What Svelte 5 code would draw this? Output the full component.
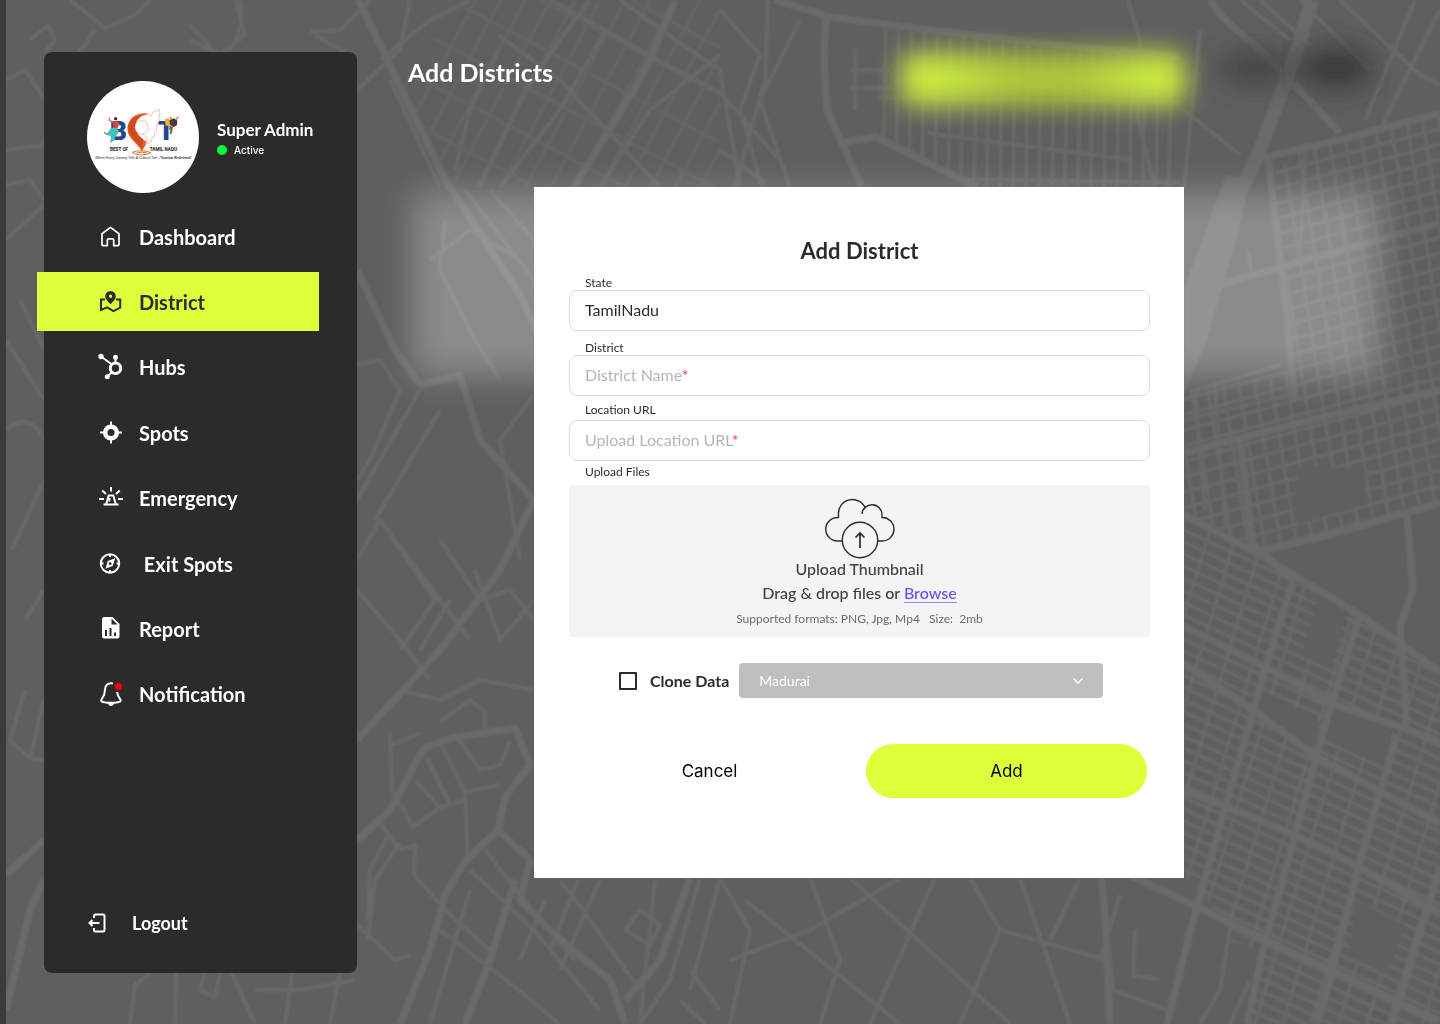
<script>
  const items = [
    { id: 'dashboard', label: 'Dashboard' },
    { id: 'district', label: 'District' },
    { id: 'hubs', label: 'Hubs' },
    { id: 'spots', label: 'Spots' },
    { id: 'emergency', label: 'Emergency' },
    { id: 'exit', label: '\u00a0Exit Spots' },
    { id: 'report', label: 'Report' },
    { id: 'notification', label: 'Notification' }
  ];
  const active = 'district';

  let stateName = $state('TamilNadu');
  let district = $state('');
  let location = $state('');
  let clone = $state(false);

  const majorRoads = [
    'M358 0L402 90L445 180L519 293L560 380',
    'M675 0L650 60L634 90L574 187L560 230',
    'M775 0L830 17L930 30L1041 43L1179 57',
    'M826 17Q822 70 828 113L862 187',
    'M839 143L876 137L977 187',
    'M1211 0Q1216 16 1253 43L1295 85L1340 133',
    'M1253 160L1340 140L1440 113',
    'M1211 287L1300 262L1440 223',
    'M1184 453L1310 420L1440 390',
    'M1183 514L1260 555L1360 615L1440 672',
    'M1183 626L1267 668L1333 704L1400 727L1440 742',
    'M1183 663L1250 708L1317 757L1440 824',
    'M1183 790L1260 820L1333 853L1440 913',
    'M1100 861L1193 905L1287 950L1440 1021',
    'M1293 581L1267 663L1227 801L1190 932L1167 1024',
    'M1360 615L1330 708L1293 842L1263 950L1247 1024',
    'M1397 734L1360 861L1330 980L1317 1024',
    'M1440 868L1400 991L1390 1024',
    'M1257 552L1330 535L1440 503',
    'M1240 440L1253 544L1293 581',
    'M1407 514L1413 589L1400 626L1407 727',
    'M1268 160L1285 300L1295 400',
    'M534 500L500 570L440 650L357 740',
    'M357 840L390 810L424 748L450 738L515 728L530 765L505 797L498 830L466 860L445 895L430 950L400 1024',
    'M498 830L530 860L520 900L555 935L610 980L625 1024',
    'M515 880L490 960L465 1024',
    'M690 878L660 960L625 1000',
    'M6 875L44 840',
    'M6 1010L30 910L44 880',
    'M1100 861L1106 930L1110 1024',
    'M357 270L395 350L420 385L460 375L480 440L534 500'
  ];
  const minorRoads = [
    'M551 0L640 50L720 93L780 160', 'M498 35L560 80L660 187', 'M498 50L470 110L455 170',
    'M480 187L525 90L560 40L590 0', 'M500 187L560 110L606 30', 'M600 187L650 110L720 55',
    'M620 0L690 50L720 70L740 187', 'M720 10L760 55L740 110L762 187', 'M800 20L760 100L790 187',
    'M768 0L765 80L735 187', 'M720 150L766 183', 'M927 133L1133 160', 'M850 70H890M850 88H890M855 48V110',
    'M1128 0L1140 40L1138 120L1155 187', 'M1184 110L1240 155', 'M1200 30L1184 187',
    'M1240 0L1290 40M1260 0L1310 45M1300 0L1370 70M1340 0L1420 75L1440 85', 'M1440 10L1380 130M1415 0L1365 120',
    'M70 0L105 28L135 15L150 0', 'M95 30L60 80L44 145', 'M235 0L245 35L220 55L190 40', 'M190 25L215 52',
    'M240 0Q246 30 228 52', 'M310 32L340 30L370 0', 'M315 35L345 52', 'M30 40L48 25L55 40L45 52',
    'M6 80L25 70L44 98', 'M6 150L44 145', 'M6 185L30 180L44 200', 'M6 240L44 205', 'M6 340L44 400M20 300L44 350',
    'M6 430Q30 410 44 440', 'M12 550L44 480M25 620L44 590', 'M30 758L44 700M10 740L30 758L44 760M10 740L25 690',
    'M357 90L400 50L410 0', 'M380 60L430 20L470 0', 'M390 80L440 187',
    'M430 260L470 230L520 260M445 220L440 270L475 340L500 380', 'M465 190L534 280M490 190L534 240',
    'M357 365L380 360L400 390L370 460L357 480', 'M357 500L420 390M375 520L440 410',
    'M357 560L380 520L470 640M357 590L400 640L430 680', 'M390 535L435 600L400 650', 'M440 540L480 600L510 590L534 620',
    'M400 690L440 700L480 680L534 690', 'M450 600L420 650M475 570L500 640L534 600', 'M534 395L500 440L520 560',
    'M390 732L392 790L400 805M392 745L420 733', 'M440 742L465 792M427 758L450 805M415 780L440 808M402 805L412 827L440 808L465 800',
    'M458 738L480 770L500 765L510 742', 'M465 792L500 785M465 792L468 860M440 722L470 700L485 712L484 728',
    'M380 823L400 850L415 845L414 875L445 910L490 950', 'M400 843L375 880L368 940M388 835L370 870L368 920M357 925L395 960L410 955',
    'M470 870L534 930L600 1010', 'M485 850L540 920L575 960', 'M440 930L500 975L560 1024', 'M470 890L430 1024',
    'M545 900L520 960M560 880L590 920L640 990M578 880L550 950M600 880L560 970', 'M640 910L625 930L650 945L660 925Z',
    'M700 878L670 980L640 1024M720 878L690 990M655 880L640 1024', 'M690 970L720 1010M680 1000L705 1024',
    'M130 1024L135 985L150 973M175 1024L176 973M205 973L200 990L215 998L220 973M232 973L255 1024M255 990H300L355 980M292 973L285 1024M330 1024L340 973',
    'M730 1024L750 930L720 878M730 960L810 930L900 878', 'M810 878L840 960L820 1024', 'M745 900L900 1024M850 878L1010 1024',
    'M935 878L870 1024M970 878L1000 930L960 1024', 'M1000 930L1106 960', 'M1020 878L1070 1024M1080 878L1050 940',
    'M1100 878L1113 990L1167 1010M1135 930L1133 975L1160 980', 'M1120 895L1100 960', 'M1230 928L1220 990L1200 1024M1250 980L1230 1024',
    'M1190 392L1280 365M1184 420L1290 395M1195 392L1205 510M1215 385L1225 525M1248 250L1252 275M1300 262L1305 150'
  ];
</script>

<svelte:head><title>Add Districts</title></svelte:head>

<div class="page">
  <svg class="map" viewBox="0 0 1440 1024" preserveAspectRatio="xMidYMid slice" aria-hidden="true">
    <defs>
      <pattern id="streets-a" width="27" height="11" patternUnits="userSpaceOnUse" patternTransform="rotate(25) skewX(8)">
        <path d="M0 2H27M2 0V11" />
      </pattern>
      <pattern id="streets-b" width="16" height="15" patternUnits="userSpaceOnUse" patternTransform="rotate(-15) skewX(-6)">
        <path d="M0 2H16M2 0V15" />
      </pattern>
      <pattern id="streets-c" width="13" height="80" patternUnits="userSpaceOnUse" patternTransform="rotate(1)">
        <path d="M2 0V80M0 2H13" />
      </pattern>
      <pattern id="streets-d" width="42" height="22" patternUnits="userSpaceOnUse" patternTransform="rotate(-62)">
        <path d="M0 2H42M2 0V22" />
      </pattern>
      <filter id="soften"><feGaussianBlur stdDeviation="1" /></filter>
      <filter id="glow" x="-20%" y="-80%" width="140%" height="260%"><feGaussianBlur stdDeviation="13" /></filter>
      <filter id="wide-glow" x="-10%" y="-40%" width="120%" height="180%"><feGaussianBlur stdDeviation="17" /></filter>
      <linearGradient id="lime">
        <stop offset="0" stop-color="#d0f13e" />
        <stop offset="0.15" stop-color="#cbec3e" />
        <stop offset="0.4" stop-color="#b0ca3b" />
        <stop offset="0.62" stop-color="#b0ca3b" />
        <stop offset="0.85" stop-color="#cbec3e" />
        <stop offset="1" stop-color="#d0f13e" />
      </linearGradient>
    </defs>
    <g class="roads" filter="url(#soften)">
      <path class="fill-a" d="M1184 515L1257 555L1293 581L1360 615L1400 640L1440 672V1024H1247L1263 950L1190 932L1184 900Z" />
      <path class="fill-b" d="M1300 150L1440 115V505L1257 552L1184 510V395L1290 370L1285 250L1268 180Z" />
      <path class="fill-c" d="M880 28L1180 58V187H975L876 137Z" />
      <path class="fill-d" d="M460 0H720V187H445L400 90Z" />
      <path class="block" d="M1320 590L1350 600L1330 668L1302 655ZM1295 500L1300 465L1365 470L1365 505L1298 524ZM1260 690L1320 722L1312 748L1256 716ZM1330 695L1392 728L1384 765L1325 740ZM1190 880L1235 935L1180 1010L1116 980L1125 890ZM1355 900L1405 925L1385 975L1350 955Z" />
      {#each majorRoads as d}<path class="major" {d} />{/each}
      {#each minorRoads as d}<path class="minor" {d} />{/each}
      <path class="avenue" d="M1312 0L1297 50L1260 150L1229 215L1205 320L1184 370" />
      <path class="plaza" d="M1226 175L1250 180L1236 240L1205 345L1184 395V290Z" />
    </g>
    <rect class="haze" x="412" y="192" width="968" height="184" filter="url(#wide-glow)" />
    <rect fill="url(#lime)" opacity="0.96" x="900" y="52" width="286" height="54" rx="16" filter="url(#glow)" />
    <ellipse class="shade" cx="1256" cy="68" rx="38" ry="18" filter="url(#glow)" />
    <ellipse class="shade deep" cx="1336" cy="68" rx="38" ry="21" filter="url(#glow)" />
  </svg>

  <aside class="sidebar">
    <div class="profile">
      <svg class="logo" viewBox="0 0 336 336" role="img" aria-label="Best of Tamil Nadu">
        <circle cx="168" cy="168" r="168" fill="#fff" />
        <text class="logo-big" x="68" y="176">B</text>
        <text class="logo-big" x="212" y="176">T</text>
        <path d="M187 99C155 91 122 109 121 143C121 171 150 184 165 211C172 198 176 192 181 184C158 169 142 160 142 138C143 116 160 103 187 99Z" fill="#e95f20" />
        <path d="M168 174C156 165 146 153 145 137C145 124 152 113 163 105C137 108 123 124 124 144C126 168 154 184 165 205Z" fill="#ce4a1f" />
        <path d="M184 104L194 103L197 94L209 89L217 86L219 96L215 110L219 116L211 127L207 142L210 151L202 157L204 165L196 168L193 181L183 187L176 189L181 171L171 163L166 160" fill="#fff" stroke="#eda18a" stroke-width="2" />
        <circle cx="164" cy="139" r="20" fill="#fff" stroke="#ef9b80" stroke-width="2" />
        <path d="M136 214Q165 204 192 215Q179 223 158 222Q143 220 136 214M149 216Q165 211 180 216" fill="none" stroke="#e7682d" stroke-width="3" />
        <circle cx="86" cy="113" r="5" fill="#4b2530" />
        <path d="M77 122L89 119L94 133L91 146L78 144Z" fill="#d74452" />
        <path d="M73 140L91 141L96 153L86 166L81 181L71 180L73 166L57 161Z" fill="#40c3bd" />
        <path d="M79 124L66 117L69 110M91 123L96 135M61 160L51 154M75 179L70 184" fill="none" stroke="#c77952" stroke-width="4" />
        <path d="M233 115L244 111L250 119L247 134L236 134Z" fill="#efb331" />
        <path d="M247 117L261 112L271 119L270 132L260 139L250 132Z" fill="#4d3a36" />
        <path d="M254 116L249 108M267 116L275 107" stroke="#e46730" stroke-width="4" />
        <path d="M248 132L258 139L254 158L248 160L250 148L246 145Z" fill="#94602c" />
        <text class="logo-name" x="69" y="209">BEST OF</text>
        <text class="logo-name" x="188" y="209">TAMIL NADU</text>
        <text class="logo-tag" x="25" y="233">Where Every Journey Tells A Cultural Tale - <tspan font-weight="700">Tourism Redefined!</tspan></text>
      </svg>
      <div class="who">
        <p class="name">Super Admin</p>
        <p class="status"><span class="dot"></span>Active</p>
      </div>
    </div>

    <nav>
      {#each items as item}
        <a href="#{item.id}" class:active={item.id === active} aria-current={item.id === active ? 'page' : undefined}>
          <svg class="icon" viewBox="0 0 26 26" aria-hidden="true">
            {#if item.id === 'dashboard'}
              <path class="line" d="M5 9.700L13.500 3.400L22 9.700V20.500A1.200 1.200 0 0 1 20.800 21.700H16.700V16A1.200 1.200 0 0 0 15.500 14.800H11.500A1.200 1.200 0 0 0 10.300 16V21.700H6.200A1.200 1.200 0 0 1 5 20.500Z" />
            {:else if item.id === 'district'}
              <path fill-rule="evenodd" d="M13.500 2A5.300 5.300 0 0 0 8.200 7.300C8.200 10.300 10.800 12.600 13.500 15.200C16.200 12.600 18.800 10.300 18.800 7.300A5.300 5.300 0 0 0 13.500 2ZM13.500 5.500A1.700 1.700 0 1 1 13.500 8.900A1.700 1.700 0 0 1 13.500 5.500Z" />
              <path class="line heavy" d="M8 10.500H4V20.900L10.200 18.400L16.500 22.100L23.200 18.700V10.500H19" />
            {:else if item.id === 'hubs'}
              <circle cx="4" cy="2.500" r="2.700" /><circle cx="18.500" cy="3.300" r="2.500" /><circle cx="10.300" cy="22.700" r="2.500" />
              <circle class="line hub" cx="18.500" cy="14.300" r="5.200" />
              <path class="line heavy" d="M4 2.500L15 10.500M18.500 4V9M15 18L10.500 22.500" />
            {:else if item.id === 'spots'}
              <circle class="line ring" cx="14" cy="12.500" r="5.800" />
              <path class="line heavy" d="M14 1.500V6M14 19V23.500M3 12.500H7M21 12.500H25" />
            {:else if item.id === 'emergency'}
              <path class="line heavy" d="M6.500 19.500H21.500M9.200 19L11.700 10.500H16.300L18.800 19M14 2V6.500M5.300 5.500L9 9M22.700 5.500L19 9M2 14H7M21 14H26" />
              <path class="line" d="M13 13L12 16.500" />
            {:else if item.id === 'exit'}
              <circle class="line heavy" cx="13" cy="12.500" r="9.200" />
              <path class="line heavy" d="M13 3.500V6M13 19V21.500M4 12.500H6.500M19.500 12.500H22" />
              <path fill-rule="evenodd" d="M18.300 7.200L15.700 15L8.500 17.800L10.700 10ZM13.100 11.300A1.400 1.400 0 1 0 13.100 14.100A1.400 1.400 0 0 0 13.100 11.300Z" />
            {:else if item.id === 'report'}
              <path fill-rule="evenodd" d="M7 1H15.500L22.500 8V20.500A2 2 0 0 1 20.500 22.500H7A2 2 0 0 1 5 20.500V3A2 2 0 0 1 7 1ZM14.500 2.500V8.500H20.500ZM8 14V20H10V14ZM12.500 12V20H14.500V12ZM17 16.500V20H19V16.500Z" />
            {:else}
              <path class="line heavy" d="M16 2.500C11 1.200 8 4.500 8 8.500C8 14 6.500 15.500 4.500 18.500C3.700 19.800 4.500 20.600 6 20.900C11 22 17 22 22 20.900C24 20.400 24 19.300 23 17.800C21.200 15.500 20.300 14.200 20.200 11" />
              <path d="M11 22H17Q16.500 25 14 25Q11.500 25 11 22Z" />
              <circle class="alert" cx="21.300" cy="5.500" r="3.500" />
            {/if}
          </svg>
          <span>{item.label}</span>
        </a>
      {/each}
    </nav>

    <a class="logout" href="#logout">
      <svg viewBox="0 0 20 20" aria-hidden="true"><path d="M7 5V3Q7 1.500 8.500 1.500H16Q17.500 1.500 17.500 3V17Q17.500 18.500 16 18.500H8.500Q7 18.500 7 17V15M12.500 10H3M5.500 7L2.500 10L5.500 13" /></svg>
      <span>Logout</span>
    </a>
  </aside>

  <main>
    <h1>Add Districts</h1>

    <form class="modal" onsubmit={(e) => e.preventDefault()}>
      <h2>Add District</h2>

      <div class="field">
        <label for="state">State</label>
        <div class="control"><input id="state" type="text" bind:value={stateName} /></div>
      </div>
      <div class="field">
        <label for="district-name">District</label>
        <div class="control">
          <input id="district-name" type="text" required bind:value={district} />
          {#if !district}<span class="hint">District Name<b>*</b></span>{/if}
        </div>
      </div>
      <div class="field location">
        <label for="location">Location URL</label>
        <div class="control">
          <input id="location" type="text" required bind:value={location} />
          {#if !location}<span class="hint">Upload Location URL<b>*</b></span>{/if}
        </div>
      </div>

      <p class="caption">Upload Files</p>
      <div class="dropzone">
        <svg viewBox="0 0 70 62" aria-hidden="true">
          <path d="M17 43H12.500A11.700 11.700 0 0 1 12.500 19.500L13.500 19.400V17A14 14 0 0 1 40.500 10.500M37 16A10 10 0 0 1 57 17.500V19.500A11.700 11.700 0 0 1 57.500 43H53" />
          <circle cx="35" cy="42" r="17.700" />
          <path class="arrow" d="M35 50V35M30.500 39.500L35 35L39.500 39.500" />
        </svg>
        <p class="drop-title">Upload Thumbnail</p>
        <p class="drop-text">Drag &amp; drop files or <a href="#browse">Browse</a></p>
        <p class="formats">Supported formats: PNG, Jpg, Mp4 &nbsp; Size: &nbsp;2mb</p>
      </div>

      <div class="clone">
        <label><input type="checkbox" bind:checked={clone} />Clone Data</label>
        <div class="picker">
          <select aria-label="District to clone"><option>Madurai</option></select>
          <svg viewBox="0 0 12 12" aria-hidden="true"><path d="M1.500 3.500L6 8L10.500 3.500" /></svg>
        </div>
      </div>

      <div class="actions">
        <button type="button">Cancel</button>
        <button type="submit" class="primary">Add</button>
      </div>
    </form>
  </main>
</div>

<style>
  :global(body) { background: #5f5f5f; }
  * { box-sizing: border-box; }
  p, h1, h2 { margin: 0; }
  .page {
    position: relative;
    display: flex;
    min-height: 100vh;
    padding: 52px 0 51px 38px;
    border-left: 6px solid #3b3b3b;
    background: #5f5f5f;
    font-family: Lato, "Liberation Sans", sans-serif;
    color: #2b2b2b;
    overflow: hidden;
  }
  .map { position: absolute; inset: 0 0 0 -6px; width: calc(100% + 6px); height: 100%; clip-path: inset(0 0 0 6px); }
  pattern path { stroke: #6a6a6a; stroke-width: 3; fill: none; }
  .fill-a { fill: url(#streets-a); }
  .fill-b { fill: url(#streets-b); }
  .fill-c { fill: url(#streets-c); }
  .fill-d { fill: url(#streets-d); opacity: 0.6; }
  .block { fill: #5f5f5f; }
  .major, .minor, .avenue { fill: none; stroke: #6b6b6b; stroke-linejoin: round; }
  .major { stroke-width: 7; }
  .minor { stroke-width: 4; stroke: #696969; }
  .avenue { stroke-width: 14; }
  .plaza { fill: #6b6b6b; }
  .haze { fill: #fff; opacity: 0.28; }
  .shade { fill: #3f3f3f; opacity: 0.8; }
  .deep { fill: #303030; }

  .sidebar {
    position: relative;
    flex: 0 0 313px;
    display: flex;
    flex-direction: column;
    border-radius: 8px;
    background: #2b2b2b;
    color: #fff;
  }
  .profile { display: flex; align-items: center; gap: 18px; padding: 29px 0 14px 43px; }
  .logo { width: 112px; height: 112px; }
  .logo-big { font: 900 80px Roboto, sans-serif; fill: #24458c; }
  .logo-name { font: 700 14px Roboto, sans-serif; fill: #222; }
  .logo-tag { font: italic 10px "Liberation Sans", sans-serif; fill: #222; }
  .who { padding-top: 4px; }
  .name { font-size: 17px; line-height: 22px; font-weight: 700; }
  .status { display: flex; align-items: center; gap: 7px; font: 500 10px/18px Inter, sans-serif; }
  .dot { width: 10px; height: 10px; border-radius: 50%; background: #04ff3b; }
  nav { display: flex; flex-direction: column; justify-content: space-between; height: 517px; }
  nav a {
    display: flex;
    align-items: center;
    gap: 16px;
    height: 59px;
    margin-right: 38px;
    padding-left: 53px;
    color: #fff;
    font-size: 20px;
    line-height: 26px;
    font-weight: 700;
    text-decoration: none;
  }
  nav a.active { margin-left: -7px; padding-left: 60px; background: #dfff3b; color: #2b2b2b; }
  .icon { width: 26px; height: 26px; fill: currentColor; overflow: visible; }
  .line { fill: none; stroke: currentColor; stroke-width: 1.7; stroke-linejoin: round; }
  .heavy { stroke-width: 2; stroke-linejoin: miter; }
  .hub { stroke-width: 3; }
  .ring { stroke-width: 4.5; }
  .alert { fill: #f00; }
  .logout {
    display: flex;
    align-items: center;
    gap: 25px;
    margin: auto 0 38px 43px;
    color: #fff;
    font-size: 18px;
    line-height: 24px;
    font-weight: 700;
    text-decoration: none;
  }
  .logout svg { width: 20px; height: 20px; fill: none; stroke: #fff; stroke-width: 2; }

  main { position: relative; flex: 1; display: flex; flex-direction: column; padding: 0 130px 0 51px; }
  h1 { margin: 4px 0 99px; color: #fff; font-size: 25px; line-height: 32px; font-weight: 700; }
  .modal { align-self: center; width: 100%; max-width: 650px; padding: 50px 34px 80px 35px; background: #fff; }
  h2 { margin-bottom: 11px; font-size: 22px; line-height: 28px; font-weight: 700; text-align: center; }
  .field { display: flex; flex-direction: column; margin-bottom: 10px; }
  .field label, .caption { padding-left: 16px; font-size: 12px; line-height: 14px; }
  .location { gap: 3px; margin: -3px 0 4px; }
  .control { display: grid; }
  .control > * { grid-area: 1 / 1; }
  .control input {
    width: 100%;
    height: 41px;
    padding: 0 15px 2px;
    border: 1px solid #dcdcdc;
    border-radius: 8px;
    background: #fff;
    color: #2b2b2b;
    font: 16px Lato, sans-serif;
  }
  .hint { align-self: center; padding: 0 0 2px 16px; color: #b5b5b5; font-size: 16px; pointer-events: none; }
  .hint b { color: #f03a3a; font-weight: 400; }
  .dropzone {
    display: flex;
    flex-direction: column;
    align-items: center;
    margin-top: 6px;
    padding: 13px 0 8px;
    border-radius: 4px;
    background: #f4f4f4;
    color: #404040;
    text-align: center;
  }
  .dropzone svg { width: 70px; height: 62px; fill: none; stroke: #2b2b2b; stroke-width: 1.4; }
  .dropzone circle { fill: #f4f4f4; }
  .dropzone .arrow { stroke-width: 1.7; }
  .drop-title, .drop-text { font-size: 16px; line-height: 24px; font-weight: 500; }
  .drop-title { margin-top: -3px; }
  .drop-text a { border-bottom: 1px solid #9b87f5; color: #6c4df6; text-decoration: none; }
  .formats { margin: 5px 0 1px; font-size: 12px; line-height: 18px; color: #6b6b6b; }
  .clone { display: flex; align-items: center; gap: 10px; margin-top: 26px; padding: 0 47px 0 50px; }
  .clone label { display: flex; align-items: center; gap: 13px; font-size: 16px; font-weight: 700; white-space: nowrap; }
  .clone input { appearance: none; width: 18px; height: 18px; margin: 0; border: 2px solid #2b2b2b; border-radius: 1px; }
  .clone input:checked { background: #2b2b2b; }
  .picker { flex: 1; display: grid; align-items: center; }
  .picker > * { grid-area: 1 / 1; }
  select {
    appearance: none;
    width: 100%;
    height: 35px;
    padding: 0 20px;
    border: 0;
    border-radius: 4px;
    background: #bfbfbf;
    color: #fff;
    font: 14px Lato, sans-serif;
  }
  .picker svg { justify-self: end; width: 12px; height: 12px; margin-right: 19px; fill: none; stroke: #fff; stroke-width: 1.4; pointer-events: none; }
  .actions { display: grid; grid-template-columns: 1fr 1fr; gap: 16px; margin-top: 46px; padding-right: 3px; }
  button { height: 54px; border: 0; border-radius: 27px; background: transparent; color: #000; font: 17px Inter, sans-serif; }
  .primary { background: #dfff3b; }
</style>
